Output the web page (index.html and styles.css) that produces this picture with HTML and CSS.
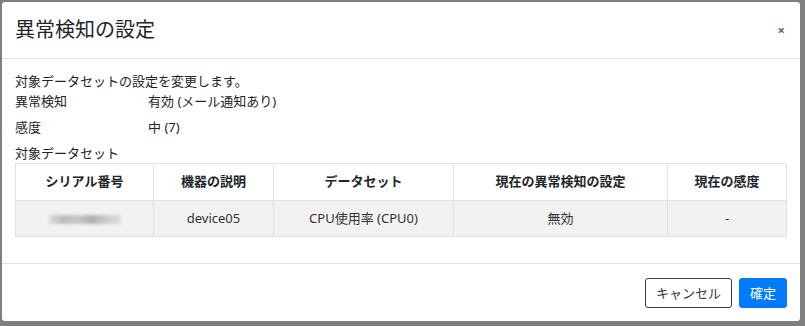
FILE: index.html
```html
<!DOCTYPE html>
<html lang="ja">
<head>
<meta charset="utf-8">
<title>異常検知の設定</title>
<link rel="stylesheet" href="styles.css">
</head>
<body>
<div class="backdrop">
  <div class="modal">
    <div class="modal-header">
      <h5 class="modal-title">異常検知の設定</h5>
      <button class="close" type="button" aria-label="Close">×</button>
    </div>
    <div class="modal-body">
      <p class="lead-text">対象データセットの設定を変更します。</p>
      <div class="info-row"><span class="label">異常検知</span><span class="value">有効 (メール通知あり)</span></div>
      <div class="info-row"><span class="label">感度</span><span class="value">中 (7)</span></div>
      <p class="section-label">対象データセット</p>
      <table class="data-table">
        <thead>
          <tr>
            <th class="c1">シリアル番号</th>
            <th class="c2">機器の説明</th>
            <th class="c3">データセット</th>
            <th class="c4">現在の異常検知の設定</th>
            <th class="c5">現在の感度</th>
          </tr>
        </thead>
        <tbody>
          <tr>
            <td><span class="blurred" aria-hidden="true"></span></td>
            <td>device05</td>
            <td>CPU使用率 (CPU0)</td>
            <td>無効</td>
            <td>-</td>
          </tr>
        </tbody>
      </table>
    </div>
    <div class="modal-footer">
      <button class="btn btn-outline" type="button">キャンセル</button>
      <button class="btn btn-primary" type="button">確定</button>
    </div>
  </div>
</div>
</body>
</html>
```
FILE: styles.css
```css
* { box-sizing: border-box; }
html, body {
  margin: 0;
  padding: 0;
  height: 100%;
}
body {
  font-family: "Noto Sans", "Noto Sans CJK JP", sans-serif;
  font-size: 13px;
  color: #212529;
  background: #7f7f7f;
}
.backdrop {
  padding: 2px 5px 5px 2px;
  height: 100%;
}
.modal {
  background: #fff;
  border-radius: 3px;
  width: 798px;
  height: 319px;
  display: flex;
  flex-direction: column;
}
.modal-header {
  display: flex;
  align-items: center;
  justify-content: space-between;
  height: 57px;
  padding: 0 13px;
  border-bottom: 1px solid #dee2e6;
}
.modal-title {
  margin: 0;
  font-size: 20px;
  font-weight: 400;
  line-height: 30px;
  color: #212529;
}
.close {
  border: 0;
  background: transparent;
  font-family: "Noto Sans", sans-serif;
  font-size: 13px;
  font-weight: 700;
  color: #666;
  padding: 0;
  margin-right: 2px;
  line-height: 1;
}
.modal-body {
  flex: 1;
  padding: 12px 13px 0 13px;
}
.lead-text, .section-label {
  margin: 0;
  line-height: 20px;
}
.info-row {
  display: flex;
  line-height: 20px;
  margin-top: 0;
  margin-bottom: 6px;
}
.label {
  width: 133px;
}
.data-table {
  width: 100%;
  border-collapse: collapse;
  border: 1px solid #dee2e6;
}
.data-table th, .data-table td {
  border: 1px solid #dee2e6;
  text-align: center;
  line-height: 19px;
  padding: 8px 6px 9px;
}
.data-table th {
  font-weight: 700;
  color: #212529;
}
.data-table td {
  background: #f2f2f2;
  color: #333;
  padding: 8px 6px 8px;
}
.c1 { width: 138px; }
.c2 { width: 120px; }
.c3 { width: 180px; }
.c4 { width: 214px; }
.blurred {
  display: inline-block;
  width: 72px;
  height: 9px;
  vertical-align: middle;
  background: linear-gradient(90deg, #ddd, #bbb 20%, #c8c8c8 40%, #b0b0b0 60%, #ccc 80%, #ddd);
  filter: blur(1.5px);
}
.modal-footer {
  display: flex;
  justify-content: flex-end;
  align-items: center;
  gap: 7px;
  height: 58px;
  padding: 0 13px;
  border-top: 1px solid #dee2e6;
}
.btn {
  font-family: "Noto Sans", "Noto Sans CJK JP", sans-serif;
  font-size: 13px;
  height: 30px;
  padding: 0 10px;
  border-radius: 3px;
  line-height: 28px;
  cursor: pointer;
}
.btn-outline {
  background: #fff;
  border: 1px solid #343a40;
  color: #343a40;
}
.btn-primary {
  background: #007bff;
  border: 1px solid #007bff;
  color: #fff;
}
```
